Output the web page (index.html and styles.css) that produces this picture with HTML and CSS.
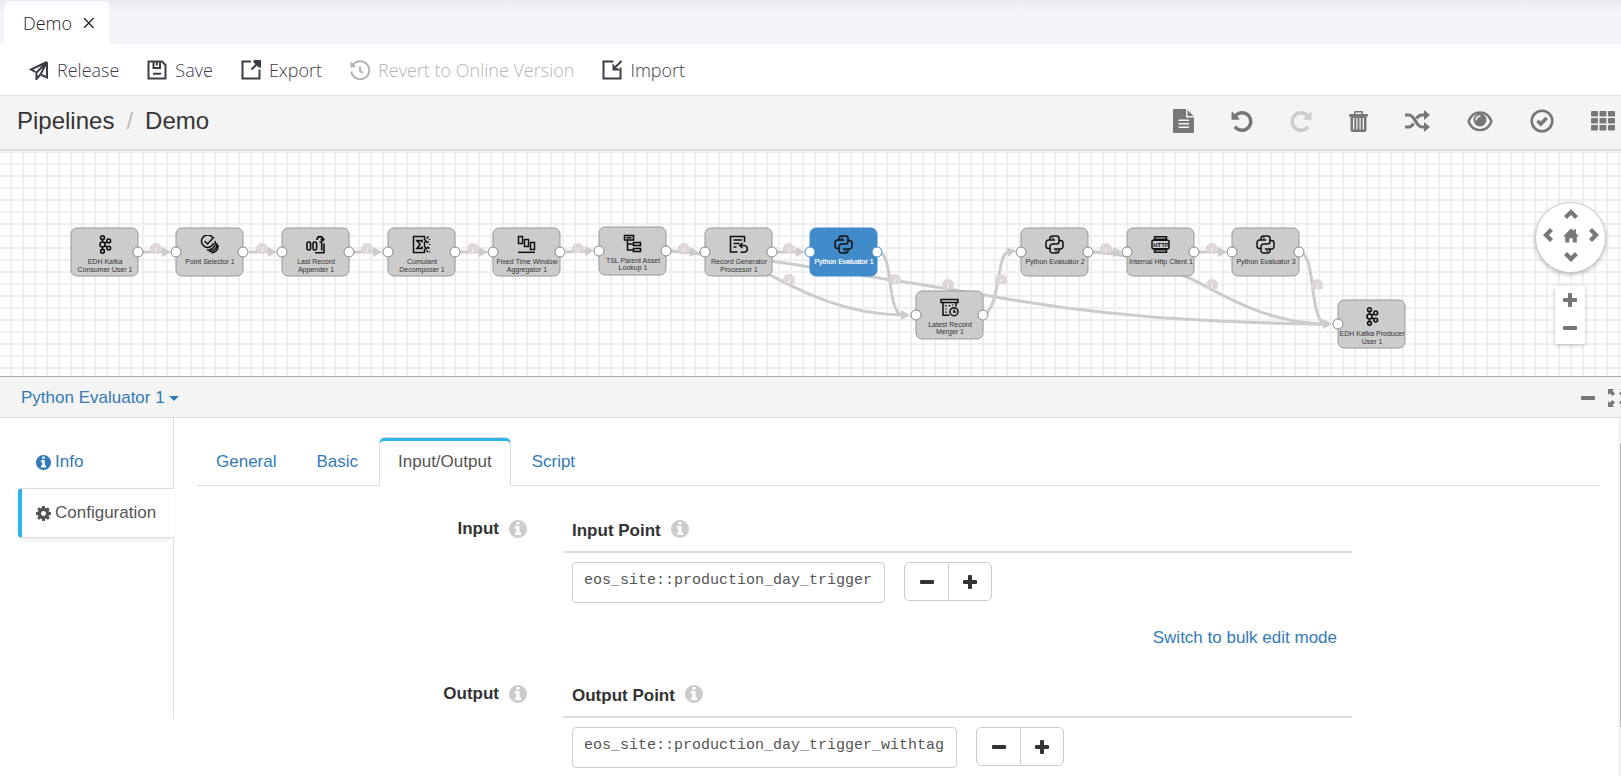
FILE: index.html
```html
<!DOCTYPE html>
<html lang="en">
<head>
<meta charset="utf-8">
<title>Pipelines / Demo</title>
<link rel="stylesheet" href="styles.css">
</head>
<body>
<svg class="sprite" aria-hidden="true">
  <symbol id="i-info" viewBox="128 128 1536 1536"><path d="M1152 1376v-160q0-14-9-23t-23-9h-96v-512q0-14-9-23t-23-9h-320q-14 0-23 9t-9 23v160q0 14 9 23t23 9h96v320h-96q-14 0-23 9t-9 23v160q0 14 9 23t23 9h448q14 0 23-9t9-23zm-128-896v-160q0-14-9-23t-23-9h-192q-14 0-23 9t-9 23v160q0 14 9 23t23 9h192q14 0 23-9t9-23zm640 416q0 209-103 385.5t-279.5 279.5-385.5 103-385.5-103-279.5-279.5-103-385.5 103-385.5 279.5-279.5 385.5-103 385.5 103 279.5 279.5 103 385.5z"/></symbol>
  <symbol id="i-undo" viewBox="128 128 1536 1536"><path d="M1664 896q0 156-61 298t-164 245-245 164-298 61q-172 0-327-72.5t-264-204.5q-7-10-6.5-22.5t8.5-20.5l137-138q10-9 25-9 16 2 23 12 73 95 179 147t225 52q104 0 198.5-40.5t163.5-109.5 109.5-163.5 40.5-198.5-40.5-198.5-109.5-163.5-163.5-109.5-198.5-40.5q-98 0-188 35.5t-160 101.5l137 138q31 30 14 69-17 40-59 40h-448q-26 0-45-19t-19-45v-448q0-42 40-59 39-17 69 14l130 129q107-101 244.5-156.5t284.5-55.5q156 0 298 61t245 164 164 245 61 298z"/></symbol>
  <symbol id="i-minus" viewBox="0 0 14 14"><rect x="0" y="5" width="14" height="4" rx="1"/></symbol>
  <symbol id="i-plus" viewBox="0 0 14 14"><path d="M6 0h2q1 0 1 1v4h4q1 0 1 1v2q0 1-1 1H9v4q0 1-1 1H6q-1 0-1-1V9H1q-1 0-1-1V6q0-1 1-1h4V1q0-1 1-1z"/></symbol>
  <symbol id="i-chevron" viewBox="0 0 14 10"><path d="M7 0l7 7-3 3-4-4-4 4-3-3z"/></symbol>
  <symbol id="n-python" viewBox="-9.5 -9.5 19 19"><g fill="none" stroke="#111" stroke-width="1.5" stroke-linecap="round">
    <path d="M0-4.5H-6a2.5 2.5 0 0 0-2.5 2.5V1.5a2.5 2.5 0 0 0 2.5 2.5h1.5V2a2.5 2.5 0 0 1 2.5-2.5h4a2.5 2.5 0 0 0 2.5-2.5V-6a2.5 2.5 0 0 0-2.5-2.5h-4A2.5 2.5 0 0 0-4.5-6v1.5M-1.6-6.400v.1"/>
    <path d="M0 4.5H6a2.5 2.5 0 0 0 2.5-2.5V-1.5A2.5 2.5 0 0 0 6-4H4.5M-4.5 4V6A2.5 2.5 0 0 0-2 8.5h4A2.5 2.5 0 0 0 4.5 6V4.5M1.6 6.400v-.1"/></g></symbol>
  <symbol id="n-kafka" viewBox="-9.5 -9.5 19 19"><g fill="none" stroke="#111" stroke-width="1.6">
    <circle cx="-2" cy="-6.8" r="1.900"/><circle cx="-2" cy="0" r="2.5"/><circle cx="-2" cy="6.8" r="1.900"/><circle cx="4.200" cy="-3.6" r="1.900"/><circle cx="4.200" cy="3.6" r="1.900"/><path d="M-2-4.8V-2.5M-2 2.5V4.8M.2-1.300l2.300-1.300M.2 1.300l2.300 1.300"/></g></symbol>
  <symbol id="n-point" viewBox="-9.5 -9.5 19 19"><g fill="none" stroke="#111" stroke-width="1.5">
    <path d="M3-7.200A6.2 6.2 0 1 0 4-1.200"/><path d="M-5-3.5L-2-.5 4.500-7.5"/><path d="M5.500-3.500A7 7 0 0 1-2.500 5.300M7.200-1.500A7 7 0 0 1-.5 7M8.500.5A7 7 0 0 1 2 8.500"/></g></symbol>
  <symbol id="n-last" viewBox="-9.5 -9.5 19 19"><g fill="none" stroke="#111" stroke-width="1.6">
    <rect x="-8.5" y="-2.5" width="3.6" height="8" rx="1.5"/><rect x="-2.5" y="-2.5" width="3.6" height="8" rx="1.5"/><path d="M4-2.5H6.2V6M-.5 8.300H8.500V-1"/><path d="M1.500-4.500C1.500-9 7.500-9 7.500-4.500M5-5l2.500 1L8.700-6"/></g></symbol>
  <symbol id="n-sigma" viewBox="-9.5 -9.5 19 19"><g fill="none" stroke="#111" stroke-width="1.5">
    <path d="M3-8H-8V8H3V5l2-1-2-2V-2l2-1-2-2z"/><path d="M.5-2V-3.8H-4.5L-1.5 0-4.5 3.800H.5V2" stroke-width="1.700"/><path d="M5-6l2-2M5.500-1.500l2-1.500M5.500 2.500L8 4M5 6l1.500 1.500M8-5.500v1M8.200-.5v1M8 7v1"/></g></symbol>
  <symbol id="n-window" viewBox="-9.5 -9.5 19 19"><g fill="none" stroke="#111" stroke-width="1.5">
    <rect x="-8" y="-8" width="4" height="7"/><rect x="-2" y="-5" width="4" height="7"/><rect x="4" y="-2" width="4" height="7"/><path d="M-8.500 7.800H8.500"/></g></symbol>
  <symbol id="n-tree" viewBox="-9.5 -9.5 19 19"><g fill="none" stroke="#111" stroke-width="1.6">
    <rect x="-8" y="-8" width="9" height="4.5"/><rect x="1" y="-1" width="7" height="3"/><rect x="1" y="5" width="7" height="3"/><path d="M-5-3.500V6.500H1M-5 .5H1M-6-5.800h5"/></g></symbol>
  <symbol id="n-record" viewBox="-9.5 -9.5 19 19"><g fill="none" stroke="#111" stroke-width="1.6">
    <path d="M6-2.500V-8H-8V7.500H-1M-5-4.500H3.500M-5-1H1M-5 2.500h3"/><path d="M2 1H5.500A3.300 3.300 0 0 1 5.500 7.700H2M4-1.500L1.200 1 4 3.500"/></g></symbol>
  <symbol id="n-merger" viewBox="-9.5 -9.5 19 19"><g fill="none" stroke="#111" stroke-width="1.5">
    <rect x="-8.500" y="-8" width="17" height="3"/><path d="M-6.500-5V7.800H0M6.500-5V-1"/><circle cx="4.500" cy="4.200" r="4"/><path d="M4.500 2v2.500h2M-3.500-2.500V-1M0-2.500V-1M3.200-3v1M-3.500 1v1M-3.500 4v1.200"/></g></symbol>
  <symbol id="n-http" viewBox="-9.5 -9.5 19 19"><g fill="none" stroke="#111" stroke-width="1.5">
    <path d="M-6-4.500V-7.700H6V-4.500M-6 4.500V7.700H6V4.500M-6 5.200H6M-6-5.200H6"/><rect x="-8.500" y="-4.200" width="17" height="8.400" rx="1"/></g></symbol>
  <symbol id="gauge" viewBox="0 0 12 10"><path fill="#dbd5d5" d="M6 0a6 6 0 0 1 6 6q0 2-1 4H1Q0 8 0 6a6 6 0 0 1 6-6z"/><path fill="none" stroke="#f8f5f5" stroke-linecap="round" d="M5.600 7.500L7 4.500M2 6h.2M3.300 3.200h.2M6 1.800h.1M9 3.200h.2M10 6h.2M5 8h1.500"/></symbol>
</svg>

<header class="tabbar">
  <div class="doc-tab"><span>Demo</span>
    <button class="close" aria-label="Close Demo"><svg width="10" height="10" viewBox="0 0 10 10"><path d="M0 0l9.500 10M9.500 0L0 10" fill="none" stroke="#222" stroke-width="1.300"/></svg></button>
  </div>
</header>

<nav class="actions">
  <button class="action"><svg class="outline" width="20" height="20" viewBox="0 0 20 20"><path d="M18 2L2 9.500l4.500 2.500M18 2v15.500l-5.500-2.500M18 2L7.500 12.500V19l4-4.500L18 2"/></svg>Release</button>
  <button class="action"><svg class="outline" width="20" height="20" viewBox="0 0 20 20"><path d="M1.500 1.500H15l3.500 3.500v13.500h-17zM6.500 1.500v6.500H13V1.500M9.800 2v3.500M6 13.800h8"/></svg>Save</button>
  <button class="action"><svg class="outline" width="20" height="20" viewBox="0 0 20 20"><path d="M10 1.500H1.500v17h17V9.500M10.500 9.500l7-7"/><path class="solid" d="M12.500 0H20v7.500h-2.200L12.500 2.200z"/></svg>Export</button>
  <button class="action" disabled><svg class="outline" width="20" height="20" viewBox="0 0 20 20"><path d="M2.500 5.500a9 9 0 1 1-1.200 6M10 6.500V11l3 2"/><path class="solid" d="M.5 1.500v6.300l6-1z"/></svg>Revert to Online Version</button>
  <button class="action"><svg class="outline" width="20" height="20" viewBox="0 0 20 20"><path d="M11.500 1.500h-10v17h17v-11M19.500 1l-7 7"/><path class="solid" d="M10.500 3.500v7H18l-2-2.200-3.500-.5V5.200z"/></svg>Import</button>
</nav>

<div class="pipeline-bar">
  <nav class="crumbs"><a href="#">Pipelines</a><span class="slash">/</span><span>Demo</span></nav>
  <div class="tools">
    <button aria-label="Notes"><svg width="21" height="24" viewBox="0 0 21 24"><path fill-rule="evenodd" d="M1 0H13V8.500H21V23q0 1-1 1H1q-1 0-1-1V1Q0 0 1 0zM5.500 10.500v1.500h10.500v-1.500zM5.500 14v1.500h10.500V14zM5.500 17.500V19h10.500v-1.500z"/><path d="M14.500 1l6 6h-6z"/></svg></button>
    <button aria-label="Undo"><svg width="22" height="21"><use href="#i-undo"/></svg></button>
    <button aria-label="Redo" disabled><svg class="mirrored" width="22" height="21"><use href="#i-undo"/></svg></button>
    <button aria-label="Delete"><svg width="19" height="21" viewBox="0 0 19 21"><path fill-rule="evenodd" d="M6 0h7q1 0 1 1v2h4q1 0 1 1v1.500h-1.500V19q0 2-2 2h-12q-2 0-2-2V5.500H0V4q0-1 1-1h4V1q0-1 1-1zm.5 1.500V3h6V1.500zM4 7v11.500h1.300V7zM7.300 7v11.500h1.200V7zM10.500 7v11.500h1.200V7zM13.700 7v11.500H15V7z"/></svg></button>
    <button aria-label="Auto arrange"><svg width="25" height="22" viewBox="0 0 25 22"><path d="M0 5h4c6 0 7 12 13 12h3M0 17h4c2 0 3-1 4.500-3.500M11.500 8.500C13 6 14.500 5 17 5h3" fill="none" stroke="currentColor" stroke-width="3.200"/><path d="M19 0l6 5-6 5zM19 12l6 5-6 5z"/></svg></button>
    <button aria-label="Preview"><svg width="26" height="21" viewBox="0 0 26 21"><path d="M1.500 10.500C6-1.500 20-1.500 24.500 10.500 20 22 6 22 1.500 10.500z" fill="none" stroke="currentColor" stroke-width="2.400"/><path fill-rule="evenodd" d="M13 2.500a6.500 6.500 0 1 1 0 13 6.500 6.500 0 0 1 0-13zM13 4.500c-3 0-4.800 2-4.500 4.500.2.800 1.300.8 1.500 0C10 7 11 6 13 6c.8-.3.800-1.300 0-1.500z"/></svg></button>
    <button aria-label="Validate"><svg class="outline" width="24" height="24" viewBox="0 0 24 24"><circle cx="12" cy="12" r="10.300" stroke-width="2.600"/><path d="M7.500 11.800l3.200 3.200L16.700 9" stroke-width="3.600"/></svg></button>
    <button aria-label="Stage library"><svg width="24" height="20" viewBox="0 0 24 20"><rect width="7" height="5.500" rx="1"/><rect x="8.500" width="7" height="5.500" rx="1"/><rect x="17" width="7" height="5.500" rx="1"/><rect y="7" width="7" height="5.500" rx="1"/><rect x="8.500" y="7" width="7" height="5.500" rx="1"/><rect x="17" y="7" width="7" height="5.500" rx="1"/><rect y="14" width="7" height="5.500" rx="1"/><rect x="8.500" y="14" width="7" height="5.500" rx="1"/><rect x="17" y="14" width="7" height="5.500" rx="1"/></svg></button>
  </div>
</div>

<main class="canvas">
  <svg class="graph" width="100%" height="225">
    <defs><marker id="arrow" markerUnits="userSpaceOnUse" markerWidth="10" markerHeight="12" refX="1" refY="6" orient="auto"><path d="M0 1l9 5-9 5z" fill="#ccc"/></marker></defs>
    <g transform="translate(0 -151)">
      <g class="wires">
        <path d="M143 252H163"/><path d="M249 252H269"/><path d="M354 252H374"/><path d="M460 252H480"/><path d="M566 252L586 251"/>
        <path d="M671 251L691 252"/><path d="M777 252H797"/><path d="M1094 252H1114"/><path d="M1199 252H1219"/>
        <path d="M668 251C730 255 750 265 772 276S840 314 902 315"/>
        <path class="plain" d="M880 253C893 255 887 312 902 315"/>
        <path d="M985 314C1000 305 997 254 1008 252"/>
        <path class="plain" d="M668 251C740 256 780 262 810 267S940 287 990 296S1120 316 1200 320S1300 324 1324 324"/>
        <path class="plain" d="M1093 252C1140 255 1165 268 1187 277S1260 323 1324 324"/>
        <path class="plain" d="M1303 254C1315 262 1310 315 1324 324"/>
        <path d="M1314 324H1324"/>
      </g>
      <g class="gauges">
        <use href="#gauge" x="150" y="243" width="12" height="10"/><use href="#gauge" x="256" y="243" width="12" height="10"/><use href="#gauge" x="361" y="243" width="12" height="10"/><use href="#gauge" x="467" y="243" width="12" height="10"/><use href="#gauge" x="572" y="243" width="12" height="10"/><use href="#gauge" x="678" y="243" width="12" height="10"/><use href="#gauge" x="783" y="243" width="12" height="10"/><use href="#gauge" x="783" y="274" width="12" height="10"/><use href="#gauge" x="889" y="274" width="12" height="10"/><use href="#gauge" x="942" y="279" width="12" height="10"/><use href="#gauge" x="995" y="274" width="12" height="10"/><use href="#gauge" x="1100" y="243" width="12" height="10"/><use href="#gauge" x="1206" y="243" width="12" height="10"/><use href="#gauge" x="1206" y="279" width="12" height="10"/><use href="#gauge" x="1311" y="279" width="12" height="10"/>
      </g>
      <g class="nodes">
        <g class="node" transform="translate(71 228)"><rect width="67" height="48" rx="6"/><use href="#n-kafka" x="24" y="7" width="19" height="19"/><text x="34" y="36">EDH Kafka</text><text x="34" y="44">Consumer User 1</text><circle cx="67" cy="24" r="5"/></g>
        <g class="node" transform="translate(176 228)"><rect width="67" height="48" rx="6"/><use href="#n-point" x="24" y="7" width="19" height="19"/><text x="34" y="36">Point Selector 1</text><circle cx="0" cy="24" r="5"/><circle cx="67" cy="24" r="5"/></g>
        <g class="node" transform="translate(282 228)"><rect width="67" height="48" rx="6"/><use href="#n-last" x="24" y="7" width="19" height="19"/><text x="34" y="36">Last Record</text><text x="34" y="44">Appender 1</text><circle cx="0" cy="24" r="5"/><circle cx="67" cy="24" r="5"/></g>
        <g class="node" transform="translate(388 228)"><rect width="67" height="48" rx="6"/><use href="#n-sigma" x="24" y="7" width="19" height="19"/><text x="34" y="36">Cumulant</text><text x="34" y="44">Decomposer 1</text><circle cx="0" cy="24" r="5"/><circle cx="67" cy="24" r="5"/></g>
        <g class="node" transform="translate(493 228)"><rect width="67" height="48" rx="6"/><use href="#n-window" x="24" y="7" width="19" height="19"/><text x="34" y="36">Fixed Time Window</text><text x="34" y="44">Aggregator 1</text><circle cx="0" cy="24" r="5"/><circle cx="67" cy="24" r="5"/></g>
        <g class="node" transform="translate(599 227)"><rect width="67" height="48" rx="6"/><use href="#n-tree" x="24" y="7" width="19" height="19"/><text x="34" y="36">TSL Parent Asset</text><text x="34" y="43">Lookup 1</text><circle cx="0" cy="24" r="5"/><circle cx="67" cy="24" r="5"/></g>
        <g class="node" transform="translate(705 228)"><rect width="67" height="48" rx="6"/><use href="#n-record" x="24" y="7" width="19" height="19"/><text x="34" y="36">Record Generator</text><text x="34" y="44">Processor 1</text><circle cx="0" cy="24" r="5"/><circle cx="67" cy="24" r="5"/></g>
        <g class="node selected" transform="translate(810 228)"><rect width="67" height="48" rx="6"/><use href="#n-python" x="24" y="7" width="19" height="19"/><text x="34" y="36">Python Evaluator 1</text><circle cx="0" cy="24" r="5"/><circle cx="67" cy="24" r="5"/></g>
        <g class="node" transform="translate(916 291)"><rect width="67" height="48" rx="6"/><use href="#n-merger" x="24" y="7" width="19" height="19"/><text x="34" y="36">Latest Record</text><text x="34" y="43">Merger 1</text><circle cx="0" cy="24" r="5"/><circle cx="67" cy="24" r="5"/></g>
        <g class="node" transform="translate(1021 228)"><rect width="67" height="48" rx="6"/><use href="#n-python" x="24" y="7" width="19" height="19"/><text x="34" y="36">Python Evaluator 2</text><circle cx="0" cy="24" r="5"/><circle cx="67" cy="24" r="5"/></g>
        <g class="node" transform="translate(1127 228)"><rect width="67" height="48" rx="6"/><use href="#n-http" x="24" y="7" width="19" height="19"/><text class="glyph-label" x="34" y="19">HTTP</text><text x="34" y="36">Internal Http Client 1</text><circle cx="0" cy="24" r="5"/><circle cx="67" cy="24" r="5"/></g>
        <g class="node" transform="translate(1232 228)"><rect width="67" height="48" rx="6"/><use href="#n-python" x="24" y="7" width="19" height="19"/><text x="34" y="36">Python Evaluator 3</text><circle cx="0" cy="24" r="5"/><circle cx="67" cy="24" r="5"/></g>
        <g class="node" transform="translate(1338 300)"><rect width="67" height="48" rx="6"/><use href="#n-kafka" x="24" y="7" width="19" height="19"/><text x="34" y="36">EDH Kafka Producer</text><text x="34" y="44">User 1</text><circle cx="0" cy="24" r="5"/></g>
      </g>
    </g>
  </svg>
  <div class="pan">
    <button class="pan-up" aria-label="Pan up"><svg width="14" height="10"><use href="#i-chevron"/></svg></button>
    <button class="pan-left" aria-label="Pan left"><svg width="14" height="10"><use href="#i-chevron"/></svg></button>
    <button class="pan-home" aria-label="Center"><svg width="16" height="15" viewBox="0 0 18 16"><path d="M9 0l3 3V1h2.500v4.500L18 9h-2.500v7H11v-5H7v5H2.500V9H0z"/></svg></button>
    <button class="pan-right" aria-label="Pan right"><svg width="14" height="10"><use href="#i-chevron"/></svg></button>
    <button class="pan-down" aria-label="Pan down"><svg width="14" height="10"><use href="#i-chevron"/></svg></button>
  </div>
  <div class="zoom">
    <button aria-label="Zoom in"><svg width="14" height="14"><use href="#i-plus"/></svg></button>
    <button aria-label="Zoom out"><svg width="14" height="14"><use href="#i-minus"/></svg></button>
  </div>
</main>

<section class="detail">
  <div class="detail-head">
    <button class="stage-pick">Python Evaluator 1<span class="caret"></span></button>
    <div class="detail-tools">
      <button aria-label="Minimize"><svg width="14" height="14"><use href="#i-minus"/></svg></button>
      <button aria-label="Maximize"><svg width="18" height="18" viewBox="0 0 18 18"><path d="M0 0h6L4.300 1.700 7 4.500 4.500 7 1.700 4.300 0 6zM18 0v6l-1.700-1.700L13.500 7 11 4.500l2.700-2.800L12 0zM0 18v-6l1.700 1.700L4.500 11 7 13.500l-2.700 2.800L6 18zM18 18h-6l1.700-1.700L11 13.500l2.500-2.500 2.800 2.700L18 12z"/></svg></button>
    </div>
  </div>
  <div class="detail-body">
    <nav class="side">
      <a class="side-item" href="#"><svg width="15" height="15"><use href="#i-info"/></svg>Info</a>
      <a class="side-item current" href="#"><svg width="15" height="15" viewBox="128 128 1536 1536"><path d="M1152 896q0-106-75-181t-181-75-181 75-75 181 75 181 181 75 181-75 75-181zm512-109v222q0 12-8 23t-20 13l-185 28q-19 54-39 91 35 50 107 138 10 12 10 25t-9 23q-27 37-99 108t-94 71q-12 0-26-9l-138-108q-44 23-91 38-16 136-29 186-7 28-36 28h-222q-14 0-24.5-8.5t-11.5-21.5l-28-184q-49-16-90-37l-141 107q-10 9-25 9-14 0-25-11-126-114-165-168-7-10-7-23 0-12 8-23 15-21 51-66.5t54-70.5q-27-50-41-99l-183-27q-13-2-21-12.5t-8-23.5v-222q0-12 8-23t19-13l186-28q14-46 39-92-40-57-107-138-10-12-10-24 0-10 9-23 26-36 98.5-107.5t94.5-71.5q13 0 26 10l138 107q44-23 91-38 16-136 29-186 7-28 36-28h222q14 0 24.5 8.5t11.5 21.5l28 184q49 16 90 37l142-107q9-9 24-9 13 0 25 10 129 119 165 170 7 8 7 22 0 12-8 23-15 21-51 66.5t-54 70.5q26 50 41 98l183 28q13 2 21 12.5t8 23.5z"/></svg>Configuration</a>
      <div class="side-rest"></div>
    </nav>
    <div class="pane">
      <nav class="tabs">
        <a href="#">General</a><a href="#">Basic</a><a class="current" href="#">Input/Output</a><a href="#">Script</a>
      </nav>
      <form class="config">
        <div class="row">
          <div class="row-label">Input<svg width="18" height="18"><use href="#i-info"/></svg></div>
          <div class="group">
            <label class="group-head" for="in-point">Input Point<svg width="18" height="18"><use href="#i-info"/></svg></label>
            <div class="entry"><input id="in-point" type="text" value="eos_site::production_day_trigger" style="--chars: 32">
              <div class="pair"><button type="button" aria-label="Remove"><svg width="14" height="14"><use href="#i-minus"/></svg></button><button type="button" aria-label="Add"><svg width="14" height="14"><use href="#i-plus"/></svg></button></div></div>
            <a class="bulk" href="#">Switch to bulk edit mode</a>
          </div>
        </div>
        <div class="row">
          <div class="row-label">Output<svg width="18" height="18"><use href="#i-info"/></svg></div>
          <div class="group">
            <label class="group-head" for="out-point">Output Point<svg width="18" height="18"><use href="#i-info"/></svg></label>
            <div class="entry"><input id="out-point" type="text" value="eos_site::production_day_trigger_withtag" style="--chars: 40">
              <div class="pair"><button type="button" aria-label="Remove"><svg width="14" height="14"><use href="#i-minus"/></svg></button><button type="button" aria-label="Add"><svg width="14" height="14"><use href="#i-plus"/></svg></button></div></div>
          </div>
        </div>
      </form>
    </div>
    <div class="scrollbar"><div class="thumb"></div></div>
  </div>
</section>
</body>
</html>
```
FILE: styles.css
```css
* { box-sizing: border-box; }

body {
  margin: 0;
  height: 100vh;
  display: flex;
  flex-direction: column;
  overflow: hidden;
  background: #fff;
  color: #333;
  font: 17px/24px "Liberation Sans", Arial, sans-serif;
}

svg { display: block; flex: none; fill: currentColor; }
.outline { fill: none; stroke: currentColor; stroke-width: 2px; }
.outline .solid { fill: currentColor; stroke: none; }
a { color: #337ab7; text-decoration: none; }
button {
  margin: 0;
  padding: 0;
  border: 0;
  background: none;
  color: inherit;
  font: inherit;
}
.sprite { position: absolute; width: 0; height: 0; }

/* Document tabs */
.tabbar {
  flex: none;
  height: 44px;
  padding: 1px 4px 0;
  display: flex;
  background: linear-gradient(#e9e9f0, #f4f4fa 12px);
}
.doc-tab {
  width: 105px;
  padding-left: 19px;
  display: flex;
  align-items: center;
  gap: 12px;
  border-radius: 5px 5px 0 0;
  background: linear-gradient(#f8f8fa, #fff 8px);
  color: #222;
  font: 300 18px/24px "Open Sans", sans-serif;
}

/* Pipeline actions */
.actions {
  flex: none;
  height: 52px;
  padding-left: 29px;
  display: flex;
  align-items: center;
  gap: 28px;
  border-bottom: 1px solid #e7e7e7;
}
.action {
  display: flex;
  align-items: center;
  gap: 8px;
  color: #3c3c46;
  font: 300 18px/24px "Open Sans", sans-serif;
}
.action:disabled { color: #b4b4b4; }

.pipeline-bar {
  flex: none;
  height: 55px;
  padding: 0 6px 3px 17px;
  display: flex;
  align-items: center;
  justify-content: space-between;
  background: #f4f4f4;
  border-bottom: 2px solid #ddd;
}
.crumbs { display: flex; gap: 12px; font-size: 24px; line-height: 32px; }
.crumbs a { color: inherit; }
.slash { color: #bbb; }
.tools { display: flex; align-items: center; gap: 37px; color: #777; }
.tools button:disabled { color: #ccc; }
.mirrored { transform: scaleX(-1); }

/* Graph */
.canvas {
  flex: none;
  position: relative;
  height: 225px;
  overflow: hidden;
  background:
    linear-gradient(90deg, transparent 10px, #efefef 10px) 0 0 / 12px 12px,
    linear-gradient(#efefef 2px, transparent 2px) 0 0 / 12px 12px;
}
.wires path { fill: none; stroke: #ccc; stroke-width: 3px; marker-end: url(#arrow); }
.wires .plain { marker-end: none; }
.node rect { fill: #ccc; stroke: #999; }
.node circle { fill: #fff; stroke: #888; }
.node text { fill: #333; font-size: 7px; text-anchor: middle; }
.selected rect { fill: #428bca; stroke: #428bca; }
.selected circle { stroke: #428bca; }
.selected text { fill: #fff; stroke: #fff; stroke-width: 0.2px; }
.node .glyph-label { font-size: 6px; font-weight: bold; fill: #111; }

.pan {
  position: absolute;
  top: 51px;
  right: 15px;
  width: 71px;
  height: 71px;
  padding-bottom: 4px;
  display: grid;
  grid-template: repeat(3, 1fr) / repeat(3, 1fr);
  place-items: center;
  border: 1px solid #ccc;
  border-radius: 50%;
  background: #fff;
  box-shadow: 0 2px 4px rgba(0, 0, 0, 0.25);
  color: #777;
}
.pan-up { grid-area: 1 / 2; }
.pan-left { grid-area: 2 / 1; transform: rotate(-90deg); }
.pan-home { grid-area: 2 / 2; }
.pan-right { grid-area: 2 / 3; transform: rotate(90deg); }
.pan-down { grid-area: 3 / 2; transform: rotate(180deg); }

.zoom {
  position: absolute;
  top: 135px;
  right: 36px;
  width: 30px;
  height: 58px;
  padding-bottom: 2px;
  display: grid;
  place-items: center;
  background: #fff;
  box-shadow: 0 1px 4px rgba(0, 0, 0, 0.25);
  color: #777;
}

/* Stage detail */
.detail {
  flex: 1;
  min-height: 0;
  display: flex;
  flex-direction: column;
  border-top: 1px solid #aaa;
}
.detail-head {
  flex: none;
  height: 41px;
  padding: 2px 0 0 21px;
  display: flex;
  align-items: center;
  justify-content: space-between;
  overflow: hidden;
  background: #f4f4f4;
  border-bottom: 1px solid #ddd;
}
.stage-pick { display: flex; align-items: center; gap: 4px; color: #337ab7; }
.caret { border: 5px solid transparent; border-top-color: currentColor; border-bottom: 0; }
.detail-tools {
  display: flex;
  align-items: center;
  gap: 13px;
  margin-right: -5px;
  color: #777;
}

.detail-body { flex: 1; min-height: 0; display: flex; position: relative; overflow: hidden; }
.side {
  flex: none;
  width: 174px;
  height: 301px;
  display: flex;
  flex-direction: column;
}
.side-item {
  display: flex;
  align-items: center;
  gap: 4px;
  height: 70px;
  padding: 18px 0 0 36px;
  border-right: 1px solid #ddd;
}
.side-item.current {
  height: 50px;
  margin-left: 18px;
  padding: 0 0 0 14px;
  border: solid #ddd;
  border-width: 1px 0;
  border-left: 4px solid #2bb5e8;
  border-radius: 4px 0 0 4px;
  box-shadow: -1px 2px 4px rgba(0, 0, 0, 0.08);
  color: #555;
}
.side-rest { flex: 1; border-right: 1px solid #ddd; }

.pane { flex: 1; padding: 19px 21px 0 23px; }
.tabs {
  display: flex;
  gap: 2px;
  border-bottom: 1px solid #ddd;
}
.tabs a {
  height: 49px;
  margin-bottom: -1px;
  padding: 12px 18px 0;
  border: 1px solid transparent;
}
.tabs .current {
  border-color: #ddd;
  border-bottom-color: #fff;
  border-radius: 5px 5px 0 0;
  background: #fff;
  box-shadow: inset 0 3px #2bb5e8;
  color: #555;
}

.config { padding-top: 30px; }
.row { display: grid; grid-template-columns: 366fr 789fr 248fr; margin-bottom: 31px; }
.row-label {
  height: 26px;
  padding-right: 36px;
  display: flex;
  align-items: center;
  justify-content: flex-end;
  gap: 10px;
  font-weight: bold;
}
.row-label svg, .group-head svg { color: #ccc; }
.group { display: flex; flex-direction: column; }
.group-head {
  height: 37px;
  padding: 3px 0 0 9px;
  display: flex;
  align-items: flex-start;
  gap: 10px;
  border-bottom: 2px solid #ddd;
  font-weight: bold;
}
.group-head svg { margin-top: 1px; }
.entry { display: flex; gap: 19px; padding: 9px 0 0 9px; }
.entry input {
  width: calc(var(--chars) * 1ch + 25px);
  height: 41px;
  padding: 0 0 4px 11px;
  border: 1px solid #ccc;
  border-radius: 4px;
  background: #fff;
  color: #555;
  font: 15px/20px "Liberation Mono", monospace;
}
.pair {
  height: 39px;
  display: flex;
  border: 1px solid #ccc;
  border-radius: 5px;
}
.pair button { width: 43px; display: grid; place-items: center; }
.pair button + button { border-left: 1px solid #ccc; }
.bulk { align-self: flex-end; margin: 23px 15px 0 0; }

.scrollbar {
  position: absolute;
  inset: 0 0 0 auto;
  width: 3px;
  padding-top: 25px;
  background: #f1f1f1;
}
.thumb { width: 1px; height: 284px; margin-left: 2px; background: #bbb; }
```
